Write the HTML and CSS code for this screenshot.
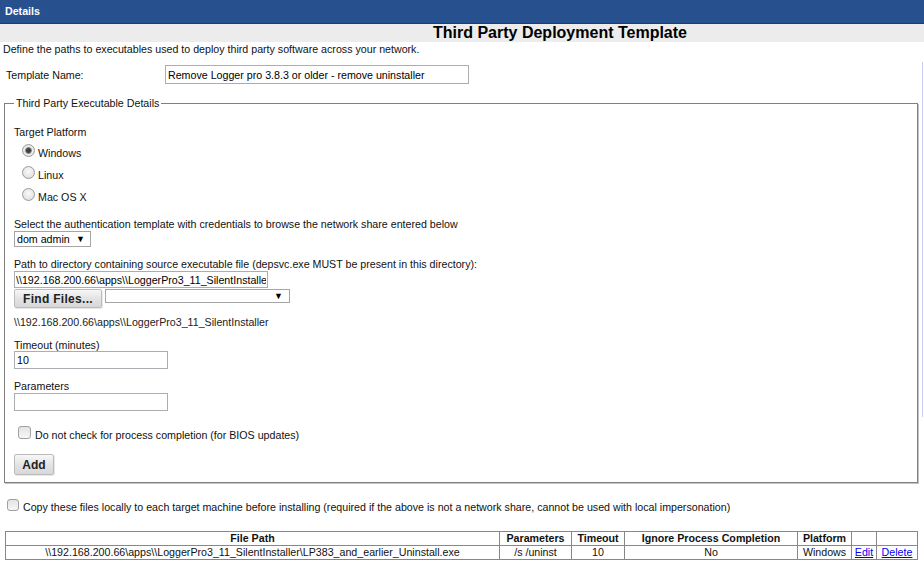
FILE: index.html
```html
<!DOCTYPE html>
<html>
<head>
<meta charset="utf-8">
<title>Third Party Deployment Template</title>
<link rel="stylesheet" href="styles.css">
</head>
<body>
<div class="topbar">Details</div>
<div class="titleband">Third Party Deployment Template</div>
<p class="desc">Define the paths to executables used to deploy third party software across your network.</p>
<div class="namerow">
  <label class="namelabel">Template Name:</label>
  <input class="field name" type="text" value="Remove Logger pro 3.8.3 or older - remove uninstaller">
</div>
<fieldset class="exec">
  <legend>Third Party Executable Details</legend>
  <div class="tp">Target Platform</div>
  <div class="radios">
    <label class="radio"><input type="radio" name="plat" checked><span>Windows</span></label>
    <label class="radio"><input type="radio" name="plat"><span>Linux</span></label>
    <label class="radio"><input type="radio" name="plat"><span>Mac OS X</span></label>
  </div>
  <div class="lbl gap10">Select the authentication template with credentials to browse the network share entered below</div>
  <div class="select auth"><span>dom admin</span><span class="arrow">&#9660;</span></div>
  <div class="lbl gap11">Path to directory containing source executable file (depsvc.exe MUST be present in this directory):</div>
  <input class="field pathin" type="text" value="\\192.168.200.66\apps\\LoggerPro3_11_SilentInstaller">
  <div class="findrow">
    <button class="btn find" type="button">Find Files...</button>
    <div class="select files"><span></span><span class="arrow">&#9660;</span></div>
  </div>
  <div class="pathtext">\\192.168.200.66\apps\\LoggerPro3_11_SilentInstaller</div>
  <div class="lbl gap11">Timeout (minutes)</div>
  <input class="field short" type="text" value="10">
  <div class="lbl gap11">Parameters</div>
  <input class="field short params" type="text" value="">
  <label class="checkrow inner"><input type="checkbox"><span>Do not check for process completion (for BIOS updates)</span></label>
  <button class="btn add" type="button">Add</button>
</fieldset>
<label class="checkrow copy"><input type="checkbox"><span>Copy these files locally to each target machine before installing (required if the above is not a network share, cannot be used with local impersonation)</span></label>
<table class="files-table">
  <colgroup>
    <col class="c-path"><col class="c-params"><col class="c-timeout"><col class="c-ignore"><col class="c-plat"><col class="c-edit"><col class="c-del">
  </colgroup>
  <thead>
    <tr><th>File Path</th><th>Parameters</th><th>Timeout</th><th>Ignore Process Completion</th><th>Platform</th><th></th><th></th></tr>
  </thead>
  <tbody>
    <tr><td>\\192.168.200.66\apps\\LoggerPro3_11_SilentInstaller\LP383_and_earlier_Uninstall.exe</td><td>/s /uninst</td><td>10</td><td>No</td><td>Windows</td><td><a href="#">Edit</a></td><td><a href="#">Delete</a></td></tr>
  </tbody>
</table>
<div class="edge"></div>
</body>
</html>
```
FILE: styles.css
```css
* { box-sizing: border-box; }

body {
  margin: 0;
  font-family: "Liberation Sans", Arial, sans-serif;
  font-size: 8pt;
  line-height: 12px;
  color: #111;
  background: #fff;
  position: relative;
  min-height: 570px;
}

.topbar {
  height: 24px;
  background: #27508f;
  border-bottom: 1px solid #1b3c74;
  color: #fff;
  font-weight: bold;
  padding-left: 5px;
  line-height: 23px;
}

.titleband {
  height: 18px;
  background: #ececec;
  text-align: center;
  padding-left: 196px;
  font-size: 16px;
  font-weight: bold;
  line-height: 18px;
  color: #000;
}

.desc {
  margin: 1px 0 0 0;
  padding-left: 3px;
  line-height: 12px;
}

.namerow {
  display: flex;
  align-items: center;
  margin-top: 10px;
}

.namelabel {
  width: 165px;
  padding-left: 6px;
}

.field {
  font: inherit;
  font-size: 8pt;
  color: #000;
  border: 1px solid #abadb3;
  background: #fff;
  padding: 0 2px;
  margin: 0;
  display: block;
  outline: none;
}

.name { width: 304px; height: 19px; }

.exec {
  margin: 13px 6px 0 4px;
  border: 1px solid #808080;
  box-shadow: 1px 1px 0 #c4c4c4;
  padding: 0 9px 7px 9px;
  min-width: 0;
}

.exec legend {
  padding: 0 2px;
  line-height: 12px;
}

.tp { margin-top: 17px; }

.radios {
  margin-top: 4px;
  padding-left: 8px;
}

.radio {
  display: flex;
  align-items: center;
  height: 22px;
}

.radio input {
  appearance: none;
  -webkit-appearance: none;
  width: 13px;
  height: 13px;
  margin: 0 3px 6px 0;
  border-radius: 50%;
  border: 1px solid #9b9b9b;
  background: radial-gradient(circle at 50% 40%, #fafafa 0, #e6e6e6 60%, #d6d6d6 100%);
}

.radio input:checked {
  background: radial-gradient(circle at 50% 50%, #3c3c3c 0, #444 2px, #8a8a8a 3px, #ececec 3.8px, #dcdcdc 100%);
}

.lbl { line-height: 12px; }
.gap10 { margin-top: 10px; }
.gap11 { margin-top: 11px; }

.select {
  display: flex;
  align-items: center;
  justify-content: space-between;
  border: 1px solid #a5a5a5;
  background: #fff;
  color: #000;
  padding: 0 5px 0 2px;
}

.select .arrow {
  font-size: 9px;
  line-height: 9px;
}

.auth {
  margin-top: 1px;
  width: 77px;
  height: 16px;
}

.pathin {
  margin-top: 1px;
  width: 254px;
  height: 17px;
  padding: 0 1px;
}

.findrow {
  display: flex;
  align-items: flex-start;
  gap: 3px;
  margin-top: 1px;
}

.btn {
  font-family: "Liberation Sans", Arial, sans-serif;
  font-size: 12px;
  font-weight: bold;
  color: #222;
  background: linear-gradient(#f7f7f7, #e2e2e2 55%, #d8d8d8);
  border: 1px solid #bcbcbc;
  border-radius: 2px;
  padding: 0;
  margin: 0;
  box-shadow: 1px 1px 0 #e8e8e8;
}

.find {
  width: 88px;
  height: 19px;
  letter-spacing: 0.3px;
}

.files {
  width: 185px;
  height: 14px;
  padding-right: 6px;
}

.pathtext {
  margin-top: 8px;
  color: #222;
}

.short {
  width: 154px;
  height: 18px;
}

.params { margin-top: 1px; }

.checkrow {
  display: flex;
  align-items: flex-start;
}

.checkrow input {
  appearance: none;
  -webkit-appearance: none;
  width: 13px;
  height: 13px;
  margin: 0;
  border: 1px solid #a0a0a0;
  border-radius: 3px;
  background: linear-gradient(#e4e4e4, #f6f6f6);
}

.checkrow.inner {
  margin-top: 15px;
  padding-left: 4px;
}

.checkrow.inner span {
  margin: 3px 0 0 4px;
}

.add {
  display: block;
  margin-top: 13px;
  width: 40px;
  height: 21px;
}

.checkrow.copy {
  margin-top: 16px;
  padding-left: 7px;
}

.checkrow.copy input {
  width: 12px;
  height: 12px;
}

.checkrow.copy span {
  margin: 2px 0 0 4px;
}

.files-table {
  margin: 18px 0 0 5px;
  width: 912px;
  border-collapse: collapse;
  table-layout: fixed;
}

.files-table th,
.files-table td {
  border: 1px solid #888;
  padding: 0 2px;
  height: 14px;
  line-height: 13px;
  text-align: center;
  white-space: nowrap;
  overflow: hidden;
  color: #111;
}

.files-table th { font-weight: bold; }

.c-path { width: 494px; }
.c-params { width: 72px; }
.c-timeout { width: 53px; }
.c-ignore { width: 173px; }
.c-plat { width: 54px; }
.c-edit { width: 25px; }
.c-del { width: 41px; }

.files-table a { color: #0000ee; text-decoration: underline; }

.edge {
  position: absolute;
  left: 922px;
  top: 62px;
  width: 1px;
  height: 355px;
  background: #c6cef2;
}
```
